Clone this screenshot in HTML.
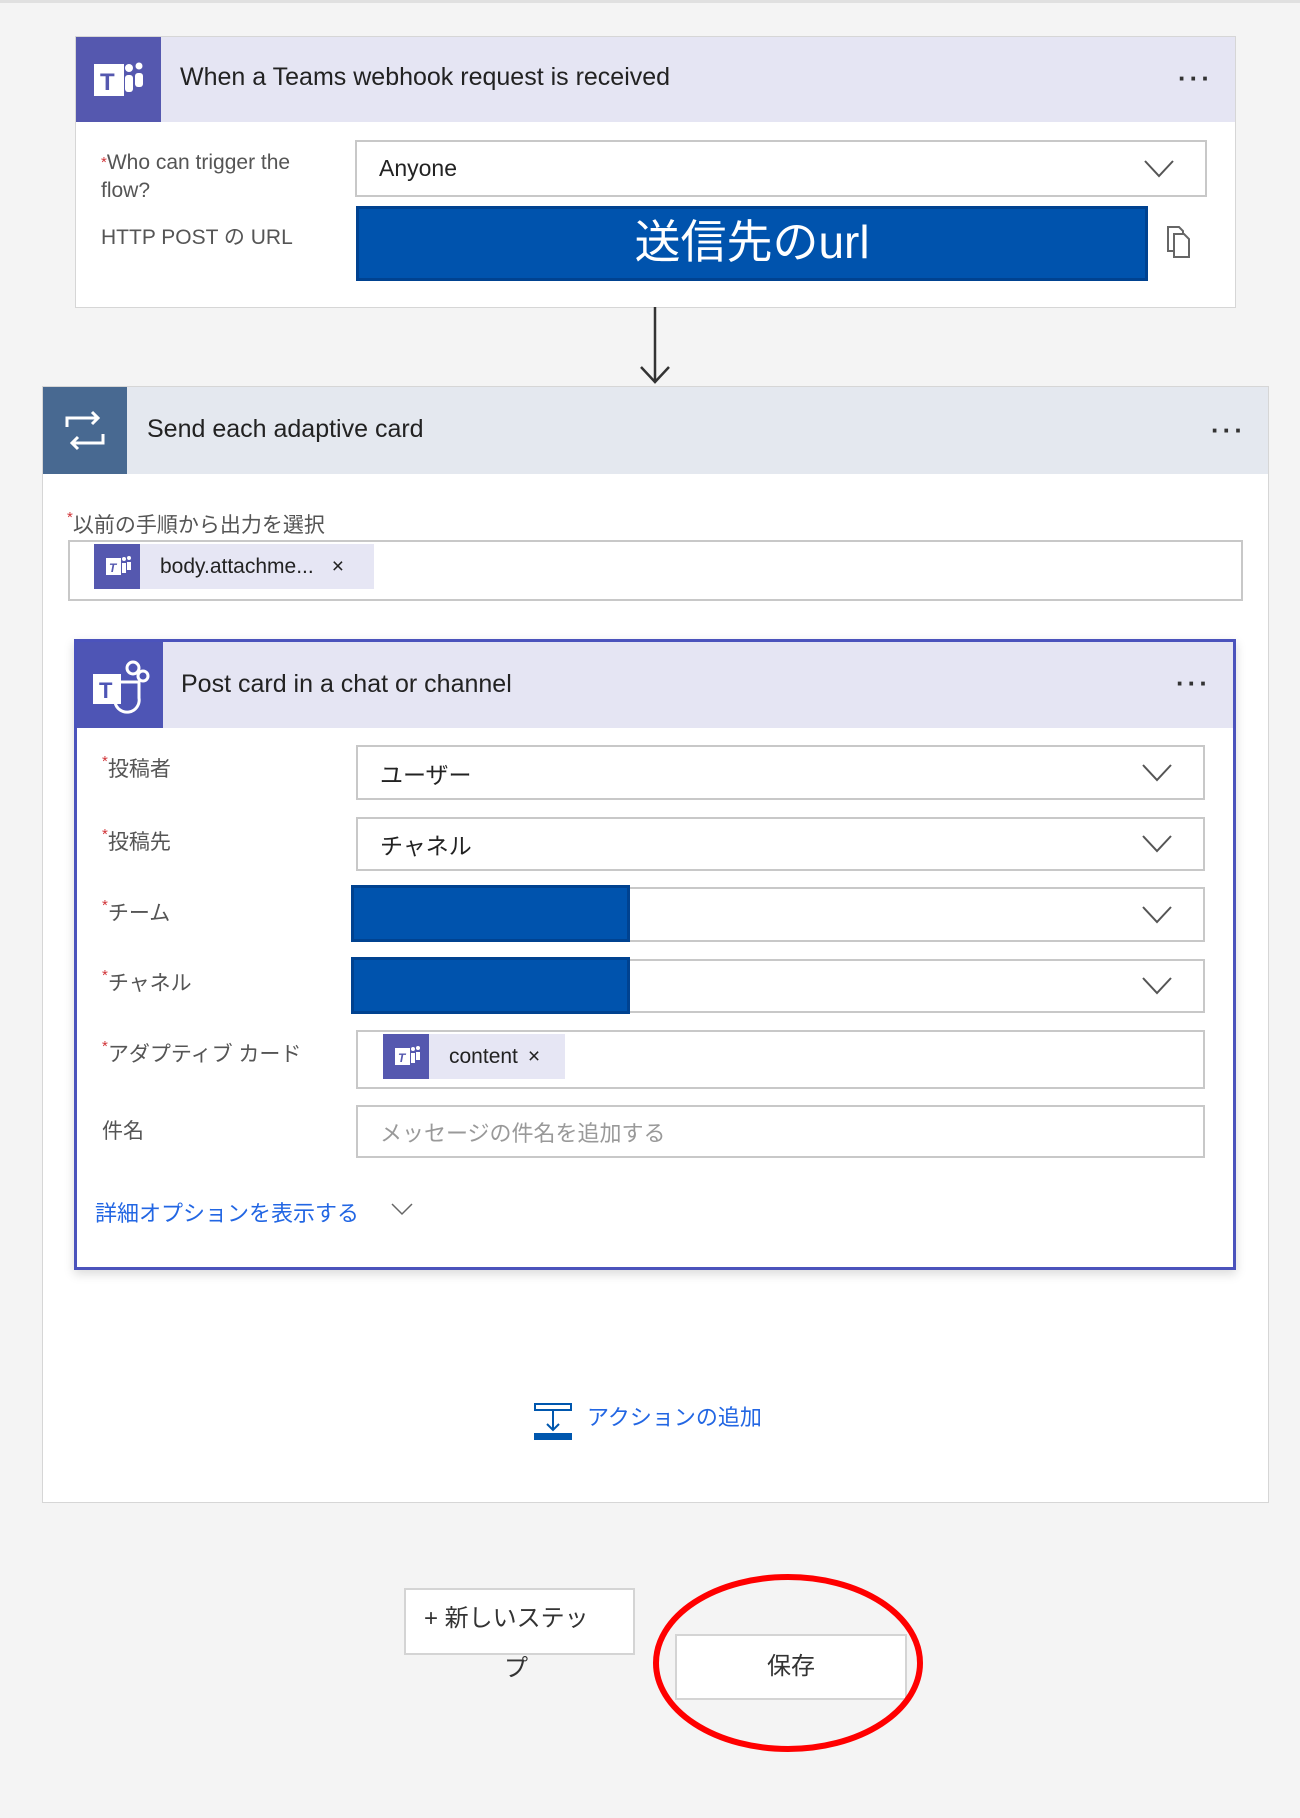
<!DOCTYPE html>
<html><head><meta charset="utf-8"><style>
*{box-sizing:border-box;margin:0;padding:0}
body{width:1300px;height:1818px;background:#f4f4f4;font-family:"Liberation Sans","Noto Sans CJK JP",sans-serif;color:#333;position:relative;overflow:hidden}
.a{position:absolute}
.card{background:#fff;border:1px solid #d6d6d6}
.hdr{position:absolute;left:0;right:0;top:0;background:#e5e5f3}
.ico{position:absolute;left:0;top:0;bottom:0;background:#5558af}
.title{position:absolute;font-size:25px;color:#222}
.dots{position:absolute;font-size:26px;letter-spacing:3px;color:#333;font-weight:bold}
.lbl{position:absolute;font-size:21px;color:#555}
.lbl b{color:#d13438;font-weight:normal;font-size:15px;vertical-align:top}
.inp{position:absolute;background:#fff;border:2px solid #c8c8c8;font-size:23px;color:#222;padding-left:22px;display:flex;align-items:center}
.chev{position:absolute;right:30px;top:50%;margin-top:-10px}
.red{position:absolute;background:#0053ad;border:3px solid #004290}
.chip{position:absolute;background:#e6e6f4;display:flex;align-items:center;font-size:21px;color:#222}
.chip i{display:block;background:#5558af;height:100%}
</style></head><body>
<div class="a" style="left:0;top:0;width:1300px;height:3px;background:#e0e0e0"></div>

<!-- card 1 -->
<div class="a card" style="left:75px;top:36px;width:1161px;height:272px">
 <div class="hdr" style="height:85px"><div class="ico" style="width:85px">
  <svg width="85" height="85" viewBox="0 0 85 85"><rect x="18" y="27" width="30" height="32" fill="#fff"/><text x="24" y="53" font-size="24" font-weight="bold" fill="#5558af" font-family="Liberation Sans">T</text><rect x="49" y="38" width="8" height="17" rx="3" fill="#fff"/><circle cx="53" cy="31" r="4" fill="#fff"/><rect x="59" y="36" width="8" height="14" rx="3" fill="#fff"/><circle cx="63" cy="29" r="3.5" fill="#fff"/></svg></div>
  <div class="title" style="left:104px;top:26px">When a Teams webhook request is received</div>
  <div class="dots" style="right:22px;top:26px">···</div>
 </div>
 <div class="lbl" style="left:25px;top:112px;line-height:28px"><b>*</b>Who can trigger the<br>flow?</div>
 <div class="lbl" style="left:25px;top:184px">HTTP POST の URL</div>
 <div class="inp" style="left:279px;top:103px;width:852px;height:57px">Anyone<svg class="chev" width="32" height="20"><path d="M2 2L16 17L30 2" fill="none" stroke="#555" stroke-width="2"/></svg></div>
 <div class="red" style="left:280px;top:169px;width:792px;height:75px;color:#fff;font-size:46px;text-align:center;line-height:66px">送信先のurl</div>
 <svg class="a" style="left:1088px;top:188px" width="30" height="34"><path d="M4 2h11l4 4v20h-15z" fill="none" stroke="#666" stroke-width="2"/><path d="M10 9h10l5 5v18h-15z" fill="#fff" stroke="#666" stroke-width="2"/></svg>
</div>

<!-- arrow -->
<svg class="a" style="left:635px;top:307px" width="40" height="80"><path d="M20 0V75M6 60L20 75L34 60" fill="none" stroke="#333" stroke-width="2.5"/></svg>

<!-- card 2 -->
<div class="a card" style="left:42px;top:386px;width:1227px;height:1117px">
 <div class="hdr" style="height:87px;background:#e4e8ef"><div class="ico" style="width:84px;background:#486991">
  <svg width="84" height="87" viewBox="0 0 84 87"><path d="M24 40V31H55M49 25L55 31L49 37" fill="none" stroke="#fff" stroke-width="3"/><path d="M60 47V56H29M35 62L29 56L35 50" fill="none" stroke="#fff" stroke-width="3"/></svg></div>
  <div class="title" style="left:104px;top:28px">Send each adaptive card</div>
  <div class="dots" style="right:22px;top:28px">···</div>
 </div>
 <div class="lbl" style="left:24px;top:122px"><b>*</b>以前の手順から出力を選択</div>
 <div class="inp" style="left:25px;top:153px;width:1175px;height:61px;padding:0"></div>
 <div class="chip" style="left:51px;top:157px;width:280px;height:45px"><i style="width:46px"><svg width="46" height="45"><rect x="12" y="14" width="15" height="17" fill="#fff"/><text x="15" y="28" font-size="12" font-weight="bold" fill="#5558af" font-family="Liberation Sans">T</text><rect x="28" y="19" width="4" height="10" fill="#fff"/><circle cx="30" cy="15" r="2" fill="#fff"/><rect x="33" y="18" width="4" height="8" fill="#fff"/><circle cx="35" cy="14" r="2" fill="#fff"/></svg></i><span style="margin-left:20px">body.attachme...</span><span style="margin-left:18px">×</span></div>
</div>

<!-- card 3 -->
<div class="a" style="left:74px;top:639px;width:1162px;height:631px;background:#fff;border:3px solid #4b53bc;box-shadow:0 4px 10px rgba(0,0,0,.15)">
 <div class="hdr" style="height:86px"><div class="ico" style="width:86px;background:#4e55b5">
  <svg width="86" height="86" viewBox="0 0 86 86"><rect x="16" y="32" width="28" height="30" fill="#fff"/><text x="22" y="56" font-size="22" font-weight="bold" fill="#4e55b5" font-family="Liberation Sans">T</text><circle cx="56" cy="26" r="6" fill="none" stroke="#fff" stroke-width="3"/><circle cx="66" cy="34" r="5" fill="none" stroke="#fff" stroke-width="3"/><path d="M44 40h18v16a12 12 0 0 1-24 4" fill="none" stroke="#fff" stroke-width="3"/></svg></div>
  <div class="title" style="left:104px;top:28px">Post card in a chat or channel</div>
  <div class="dots" style="right:22px;top:26px">···</div>
 </div>
</div>
<div class="lbl" style="left:102px;top:753px"><b>*</b>投稿者</div>
<div class="lbl" style="left:102px;top:826px"><b>*</b>投稿先</div>
<div class="lbl" style="left:102px;top:897px"><b>*</b>チーム</div>
<div class="lbl" style="left:102px;top:967px"><b>*</b>チャネル</div>
<div class="lbl" style="left:102px;top:1038px"><b>*</b>アダプティブ カード</div>
<div class="lbl" style="left:102px;top:1115px">件名</div>
<div class="inp" style="left:356px;top:745px;width:849px;height:55px">ユーザー<svg class="chev" width="32" height="20"><path d="M2 2L16 17L30 2" fill="none" stroke="#555" stroke-width="2"/></svg></div>
<div class="inp" style="left:356px;top:817px;width:849px;height:54px">チャネル<svg class="chev" width="32" height="20"><path d="M2 2L16 17L30 2" fill="none" stroke="#555" stroke-width="2"/></svg></div>
<div class="inp" style="left:356px;top:887px;width:849px;height:55px"><svg class="chev" width="32" height="20"><path d="M2 2L16 17L30 2" fill="none" stroke="#555" stroke-width="2"/></svg></div>
<div class="inp" style="left:356px;top:959px;width:849px;height:54px"><svg class="chev" width="32" height="20"><path d="M2 2L16 17L30 2" fill="none" stroke="#555" stroke-width="2"/></svg></div>
<div class="red" style="left:351px;top:885px;width:279px;height:57px"></div>
<div class="red" style="left:351px;top:957px;width:279px;height:57px"></div>
<div class="inp" style="left:356px;top:1030px;width:849px;height:59px"></div>
<div class="chip" style="left:383px;top:1034px;width:182px;height:45px"><i style="width:46px"><svg width="46" height="45"><rect x="12" y="14" width="15" height="17" fill="#fff"/><text x="15" y="28" font-size="12" font-weight="bold" fill="#5558af" font-family="Liberation Sans">T</text><rect x="28" y="19" width="4" height="10" fill="#fff"/><circle cx="30" cy="15" r="2" fill="#fff"/><rect x="33" y="18" width="4" height="8" fill="#fff"/><circle cx="35" cy="14" r="2" fill="#fff"/></svg></i><span style="margin-left:20px">content</span><span style="margin-left:10px">×</span></div>
<div class="inp" style="left:356px;top:1105px;width:849px;height:53px;color:#999;font-size:22px">メッセージの件名を追加する</div>
<div class="a" style="left:95px;top:1196px;font-size:22px;color:#2266e3">詳細オプションを表示する</div>
<svg class="a" style="left:390px;top:1202px" width="24" height="16"><path d="M2 2L12 12L22 2" fill="none" stroke="#666" stroke-width="1.5"/></svg>

<!-- add action -->
<svg class="a" style="left:533px;top:1402px" width="42" height="40"><rect x="2" y="2" width="36" height="6" fill="#fff" stroke="#0057ae" stroke-width="2"/><path d="M20 8V28M14 22L20 28L26 22" fill="none" stroke="#0057ae" stroke-width="2"/><rect x="1" y="31" width="38" height="7" fill="#0057ae"/></svg>
<div class="a" style="left:587px;top:1400px;font-size:22px;color:#2266e3">アクションの追加</div>

<!-- buttons -->
<div class="a" style="left:404px;top:1588px;width:231px;height:67px;background:#fff;border:2px solid #d4d4d4"></div>
<div class="a" style="left:424px;top:1594px;font-size:24px;color:#333;width:200px;line-height:50px;text-align:left">+ 新しいステッ<br><span style="padding-left:80px">プ</span></div>
<div class="a" style="left:675px;top:1634px;width:232px;height:66px;background:#fff;border:2px solid #d4d4d4;font-size:24px;text-align:center;line-height:62px;color:#333">保存</div>
<svg class="a" style="left:648px;top:1570px" width="280" height="190"><ellipse cx="140" cy="93" rx="132" ry="86" fill="none" stroke="#f00" stroke-width="6"/></svg>
</body></html>
